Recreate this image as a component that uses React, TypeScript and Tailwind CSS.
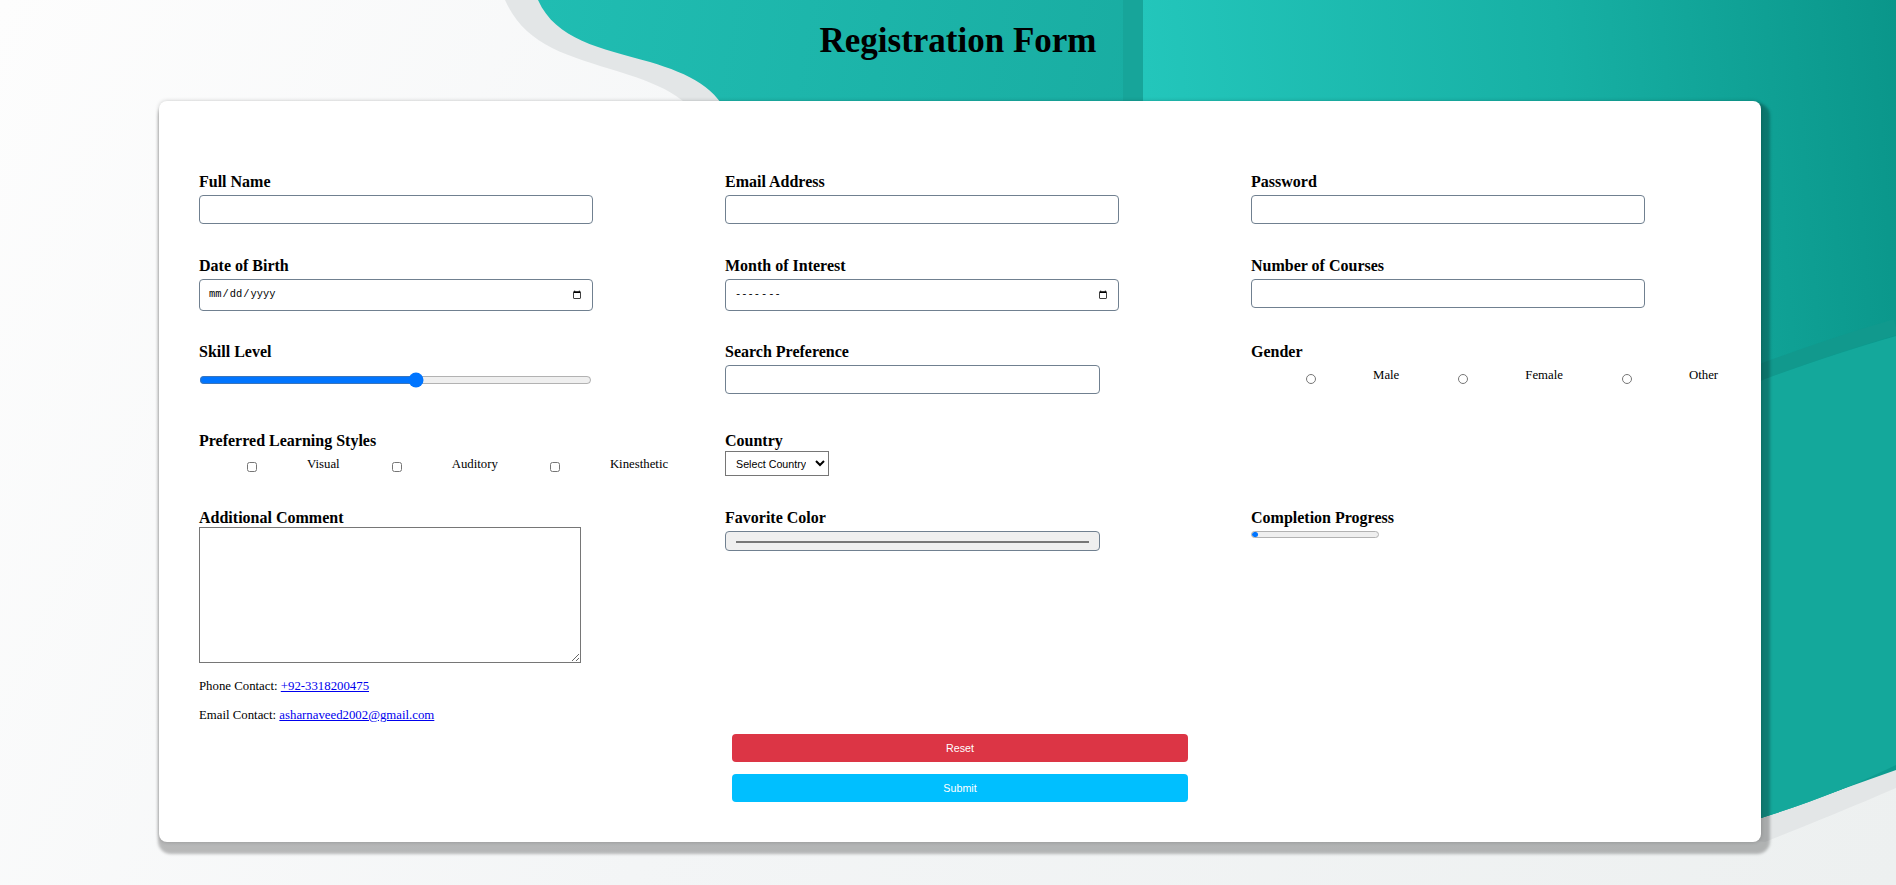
import { type ReactElement, type ReactNode } from 'react';

const textInput =
    'mt-[4px] box-border h-[29px] w-[394px] rounded-[4px] border border-[#708090] bg-white px-[8px] text-[13px]';
const dateInput =
    "mt-[4px] box-border h-[32px] w-[394px] rounded-[4px] border border-[#708090] bg-white px-[8px] font-['Liberation_Mono',monospace] text-[10.4px]";

function Background(): ReactElement {
    return (
        <svg
            className="absolute inset-0 h-full w-full"
            viewBox="0 0 1896 885"
            preserveAspectRatio="none"
            aria-hidden="true"
        >
            <defs>
                <linearGradient id="page" gradientUnits="userSpaceOnUse" x1="0" y1="0" x2="1896" y2="885">
                    <stop offset="0" stopColor="#fdfdfd" />
                    <stop offset="0.45" stopColor="#f3f5f6" />
                    <stop offset="1" stopColor="#edf0f0" />
                </linearGradient>
                <linearGradient id="tealLeft" gradientUnits="userSpaceOnUse" x1="540" y1="0" x2="1140" y2="100">
                    <stop offset="0" stopColor="#20bdb2" />
                    <stop offset="1" stopColor="#19ada2" />
                </linearGradient>
                <linearGradient id="tealRight" gradientUnits="userSpaceOnUse" x1="1143" y1="60" x2="1896" y2="0">
                    <stop offset="0" stopColor="#23c6bb" />
                    <stop offset="0.55" stopColor="#17b0a4" />
                    <stop offset="1" stopColor="#0a968a" />
                </linearGradient>
            </defs>
            <rect x="0" y="0" width="1896" height="885" fill="url(#page)" />
            {/* soft grey band under the wave */}
            <path
                d="M505,0 C525,45 565,55 620,72 C665,86 695,100 712,140 L760,700 L1700,835 L1765,842 C1800,828 1850,808 1896,788 L1896,0 Z"
                fill="#e3e6e7"
            />
            <path
                d="M538,0 C556,40 600,48 650,62 C690,74 718,88 730,120 L780,700 L1700,812 L1761,818 C1810,803 1855,785 1896,765 L1896,0 Z"
                fill="url(#tealLeft)"
            />
            <path d="M1143,0 L1896,0 L1896,770 L1761,818 L1143,760 Z" fill="url(#tealRight)" />
            <rect x="1123" y="0" width="20" height="300" fill="#17a59a" />
            <path
                d="M1143,620 Q1550,470 1761,380 Q1840,352 1896,336 L1896,765 C1855,785 1810,803 1761,818 L1143,760 Z"
                fill="#14a89b"
            />
            <path
                d="M1143,610 Q1550,460 1761,372 Q1840,343 1896,327"
                fill="none"
                stroke="#11998d"
                strokeWidth="16"
            />
        </svg>
    );
}

interface FieldProps {
    readonly label: string;
    readonly children: ReactNode;
}

function Field({ label, children }: FieldProps): ReactElement {
    return (
        <div className="flex flex-col items-start">
            <label className="block h-[18px] text-[16px] leading-[18px] font-bold">{label}</label>
            {children}
        </div>
    );
}

interface ChoiceProps {
    readonly type: 'radio' | 'checkbox';
    readonly name: string;
    readonly options: readonly string[];
    readonly boxWidth: string;
    readonly textClass: string;
}

function Choices({ type, name, options, boxWidth, textClass }: ChoiceProps): ReactElement {
    return (
        <div className="flex items-center gap-[14px] pl-[10px] text-[12.8px] leading-[15px]">
            {options.map((opt) => (
                <label key={opt} className="flex items-center">
                    <span className={`flex justify-center ${boxWidth}`}>
                        <input type={type} name={name} className="m-0 h-[10px] w-[10px]" />
                    </span>
                    <span className={`ml-[12px] ${textClass}`}>{opt}</span>
                </label>
            ))}
        </div>
    );
}

export default function App(): ReactElement {
    return (
        <div className="relative h-screen w-full overflow-hidden font-['Liberation_Serif','Times_New_Roman',serif] text-black">
            <Background />
            <div className="relative">
                <h1 className="mt-[21px] ml-[159px] w-[1602px] pr-[4px] text-center text-[35px] leading-[40px] font-bold">
                    Registration Form
                </h1>
                <form className="mt-[40px] ml-[159px] w-[1602px] rounded-[8px] bg-white px-[40px] pt-[72px] pb-[40px] shadow-[4px_7px_3px_5px_rgba(0,0,0,0.26),0_0_4px_rgba(0,0,0,0.2)]">
                    <div className="grid h-[84px] grid-cols-[500px_500px_500px] gap-x-[26px]">
                        <Field label="Full Name">
                            <input type="text" className={textInput} />
                        </Field>
                        <Field label="Email Address">
                            <input type="email" className={textInput} />
                        </Field>
                        <Field label="Password">
                            <input type="password" className={textInput} />
                        </Field>
                    </div>
                    <div className="grid h-[86px] grid-cols-[500px_500px_500px] gap-x-[26px]">
                        <Field label="Date of Birth">
                            <input type="date" className={dateInput} />
                        </Field>
                        <Field label="Month of Interest">
                            <input type="month" className={dateInput} />
                        </Field>
                        <Field label="Number of Courses">
                            <input type="number" className={textInput} />
                        </Field>
                    </div>
                    <div className="grid h-[89px] grid-cols-[500px_500px_500px] gap-x-[26px]">
                        <Field label="Skill Level">
                            <input
                                type="range"
                                min={1}
                                max={10}
                                defaultValue={6}
                                className="mt-[11px] h-[16px] w-[393px]"
                            />
                        </Field>
                        <Field label="Search Preference">
                            <input
                                type="search"
                                className="mt-[4px] box-border h-[29px] w-[375px] rounded-[4px] border border-[#708090] bg-white px-[8px] text-[13px]"
                            />
                        </Field>
                        <Field label="Gender">
                            <div className="mt-[7px]">
                                <Choices
                                    type="radio"
                                    name="gender"
                                    options={['Male', 'Female', 'Other']}
                                    boxWidth="w-[100px]"
                                    textClass="pb-[6px]"
                                />
                            </div>
                        </Field>
                    </div>
                    <div className="grid h-[77px] grid-cols-[500px_500px_500px] gap-x-[26px]">
                        <Field label="Preferred Learning Styles">
                            <div className="mt-[7px]">
                                <Choices
                                    type="checkbox"
                                    name="styles"
                                    options={['Visual', 'Auditory', 'Kinesthetic']}
                                    boxWidth="w-[86px]"
                                    textClass="pb-[4px]"
                                />
                            </div>
                        </Field>
                        <Field label="Country">
                            <select className="mt-[1px] box-border h-[25px] w-[104px] border border-[#767676] bg-white px-[6px] font-['Liberation_Sans',Arial,sans-serif] text-[10.7px]">
                                <option>Select Country</option>
                                <option>Pakistan</option>
                                <option>India</option>
                                <option>United States</option>
                            </select>
                        </Field>
                        <div />
                    </div>
                    <div className="grid grid-cols-[500px_500px_500px] gap-x-[26px]">
                        <div className="flex flex-col items-start">
                            <label className="block h-[18px] text-[16px] leading-[18px] font-bold">
                                Additional Comment
                            </label>
                            <textarea className="box-border h-[136px] w-[382px] border border-[#767676] bg-white" />
                            <p className="mt-[15px] h-[16px] text-[12.8px] leading-[16px]">
                                Phone Contact:{' '}
                                <a href="tel:+923318200475" className="text-[#0000ee] underline">
                                    +92-3318200475
                                </a>
                            </p>
                            <p className="mt-[13px] h-[16px] text-[12.8px] leading-[16px]">
                                Email Contact:{' '}
                                <a href="mailto:asharnaveed2002@gmail.com" className="text-[#0000ee] underline">
                                    asharnaveed2002@gmail.com
                                </a>
                            </p>
                        </div>
                        <Field label="Favorite Color">
                            <input
                                type="color"
                                className="mt-[4px] box-border h-[20px] w-[375px] rounded-[4px] border border-[#708090] bg-[#efefef] px-[8px] py-[6px]"
                            />
                        </Field>
                        <Field label="Completion Progress">
                            <progress
                                value={5}
                                max={100}
                                className="mt-[4px] box-border h-[7px] w-[128px] appearance-none overflow-hidden rounded-full border border-[#b2b2b2] bg-[#efefef] [&::-webkit-progress-bar]:bg-transparent [&::-webkit-progress-value]:rounded-full [&::-webkit-progress-value]:bg-[#0075ff]"
                            />
                        </Field>
                    </div>
                    <div className="mt-[11px] flex flex-col items-center gap-[12px] font-['Liberation_Sans',Arial,sans-serif] text-[10.7px] text-white">
                        <button type="reset" className="h-[28px] w-[30%] rounded-[4px] bg-[#dc3545]">
                            Reset
                        </button>
                        <button type="submit" className="h-[28px] w-[30%] rounded-[4px] bg-[#00bfff]">
                            Submit
                        </button>
                    </div>
                </form>
            </div>
        </div>
    );
}
